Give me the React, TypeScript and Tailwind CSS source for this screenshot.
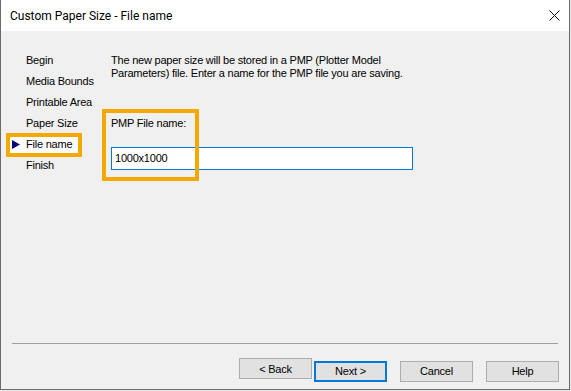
import { ReactNode } from "react";

const STEPS = ["Begin", "Media Bounds", "Printable Area", "Paper Size", "File name", "Finish"];
const ACTIVE = "File name";

function NavArrow() {
  return (
    <svg width="8" height="9" viewBox="0 0 8 9" className="block">
      <path d="M0 0 L8 4.5 L0 9 Z" fill="#000080" />
    </svg>
  );
}

function WizardButton({ children, primary }: { children: ReactNode; primary?: boolean }) {
  return (
    <button
      className={`h-[21px] w-[73px] bg-[#e1e1e1] text-[11px] text-black leading-none pt-[1px] ${
        primary ? "border-2 border-[#0078d7]" : "border border-[#adadad]"
      }`}
    >
      {children}
    </button>
  );
}

export default function App() {
  return (
    <div className="w-[571px] h-[391px] bg-[#e8e8e8] font-['Liberation_Sans',Arial,sans-serif]">
      <div className="w-[570px] h-[390px] flex flex-col border-l border-r border-b border-[#6b6b6b] bg-[#f0f0f0]">
        {/* title bar */}
        <div className="h-[31px] bg-white flex items-center justify-between pl-[9px] pr-[9px]">
          <span className="text-[12px] text-black font-['Roboto',sans-serif] leading-none">
            Custom Paper Size - File name
          </span>
          <svg width="11" height="11" viewBox="0 0 11 11" className="-mt-[1px]">
            <path d="M0.5 0.5 L10.5 10.5 M10.5 0.5 L0.5 10.5" stroke="#111" strokeWidth="1" />
          </svg>
        </div>

        {/* body */}
        <div className="h-[312px] flex text-[11px] text-black tracking-[-0.22px]">
          <div className="w-[110px] pl-[11px] pt-[19px] flex flex-col">
            {STEPS.map((step) => (
              <div key={step} className="relative h-[21px] flex items-center">
                {step === ACTIVE && (
                  <div className="absolute left-[-6px] top-[-1px] w-[76px] h-[24px] border-4 border-[#f5a800] bg-white" />
                )}
                <div className="relative w-[14px] flex items-center">
                  {step === ACTIVE && <NavArrow />}
                </div>
                <span className="relative">{step}</span>
              </div>
            ))}
          </div>

          <div className="relative flex-1 pt-[23px] flex flex-col items-start leading-[13px]">
            <p className="w-[300px]">
              The new paper size will be stored in a PMP (Plotter Model Parameters) file. Enter a name for the PMP
              file you are saving.
            </p>
            <label className="mt-[37px]">PMP File name:</label>
            <div className="mt-[17px] w-[302px] h-[23px] border border-[#0078d7] bg-white flex items-center pl-[3px]">
              1000x1000
            </div>
            <div className="absolute left-[-9px] top-[78px] w-[97px] h-[72px] border-4 border-[#f5a800]" />
          </div>
        </div>

        {/* footer */}
        <div className="flex flex-col">
          <div className="mx-[11px] h-[1px] bg-[#a0a0a0]" />
          <div className="mt-[14px] pr-[10px] flex justify-end tracking-[-0.22px]">
            <WizardButton>&lt; Back</WizardButton>
            <div className="ml-[2px]">
              <WizardButton primary>Next &gt;</WizardButton>
            </div>
            <div className="ml-[13px]">
              <WizardButton>Cancel</WizardButton>
            </div>
            <div className="ml-[13px]">
              <WizardButton>Help</WizardButton>
            </div>
          </div>
        </div>
      </div>
    </div>
  );
}
